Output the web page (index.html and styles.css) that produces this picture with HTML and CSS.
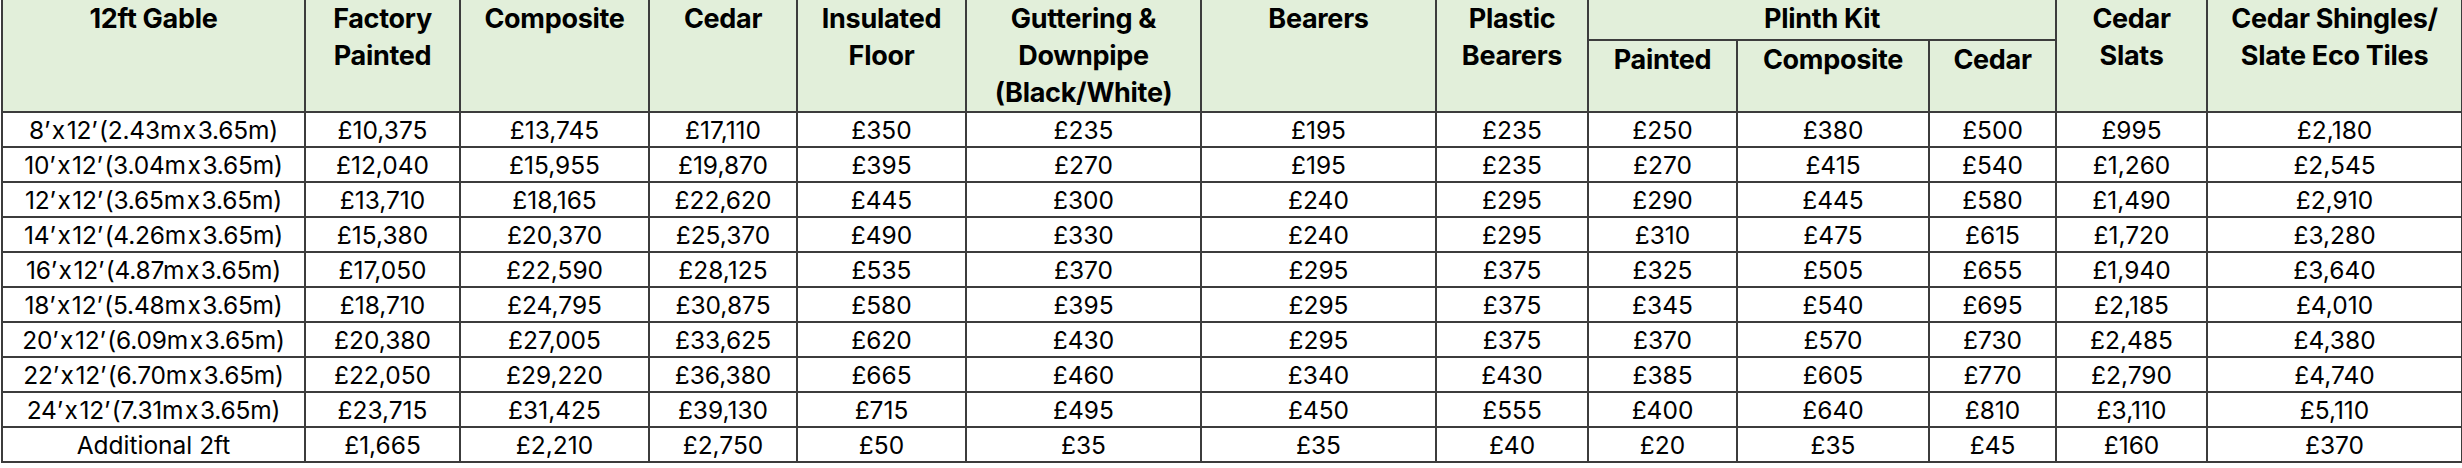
FILE: index.html
```html
<!DOCTYPE html>
<html>
<head>
<meta charset="utf-8">
<link rel="stylesheet" href="styles.css">
</head>
<body>
<table class="price">
<colgroup>
<col style="width:303px"><col style="width:155px"><col style="width:189px"><col style="width:148px"><col style="width:169px"><col style="width:235px"><col style="width:235px"><col style="width:152px"><col style="width:149px"><col style="width:192px"><col style="width:127px"><col style="width:151px"><col style="width:255px">
</colgroup>
<thead>
<tr class="h1">
<th rowspan="2">12ft Gable</th>
<th rowspan="2">Factory<br>Painted</th>
<th rowspan="2">Composite</th>
<th rowspan="2">Cedar</th>
<th rowspan="2">Insulated<br>Floor</th>
<th rowspan="2">Guttering &amp;<br>Downpipe<br>(Black/White)</th>
<th rowspan="2">Bearers</th>
<th rowspan="2">Plastic<br>Bearers</th>
<th colspan="3">Plinth Kit</th>
<th rowspan="2">Cedar<br>Slats</th>
<th rowspan="2">Cedar Shingles/<br>Slate Eco Tiles</th>
</tr>
<tr class="h2">
<th>Painted</th>
<th>Composite</th>
<th>Cedar</th>
</tr>
</thead>
<tbody>
<tr><td class="size">8’ x 12’ (2.43m x 3.65m)</td><td>£10,375</td><td>£13,745</td><td>£17,110</td><td>£350</td><td>£235</td><td>£195</td><td>£235</td><td>£250</td><td>£380</td><td>£500</td><td>£995</td><td>£2,180</td></tr>
<tr><td class="size">10’ x 12’ (3.04m x 3.65m)</td><td>£12,040</td><td>£15,955</td><td>£19,870</td><td>£395</td><td>£270</td><td>£195</td><td>£235</td><td>£270</td><td>£415</td><td>£540</td><td>£1,260</td><td>£2,545</td></tr>
<tr><td class="size">12’ x 12’ (3.65m x 3.65m)</td><td>£13,710</td><td>£18,165</td><td>£22,620</td><td>£445</td><td>£300</td><td>£240</td><td>£295</td><td>£290</td><td>£445</td><td>£580</td><td>£1,490</td><td>£2,910</td></tr>
<tr><td class="size">14’ x 12’ (4.26m x 3.65m)</td><td>£15,380</td><td>£20,370</td><td>£25,370</td><td>£490</td><td>£330</td><td>£240</td><td>£295</td><td>£310</td><td>£475</td><td>£615</td><td>£1,720</td><td>£3,280</td></tr>
<tr><td class="size">16’ x 12’ (4.87m x 3.65m)</td><td>£17,050</td><td>£22,590</td><td>£28,125</td><td>£535</td><td>£370</td><td>£295</td><td>£375</td><td>£325</td><td>£505</td><td>£655</td><td>£1,940</td><td>£3,640</td></tr>
<tr><td class="size">18’ x 12’ (5.48m x 3.65m)</td><td>£18,710</td><td>£24,795</td><td>£30,875</td><td>£580</td><td>£395</td><td>£295</td><td>£375</td><td>£345</td><td>£540</td><td>£695</td><td>£2,185</td><td>£4,010</td></tr>
<tr><td class="size">20’ x 12’ (6.09m x 3.65m)</td><td>£20,380</td><td>£27,005</td><td>£33,625</td><td>£620</td><td>£430</td><td>£295</td><td>£375</td><td>£370</td><td>£570</td><td>£730</td><td>£2,485</td><td>£4,380</td></tr>
<tr><td class="size">22’ x 12’ (6.70m x 3.65m)</td><td>£22,050</td><td>£29,220</td><td>£36,380</td><td>£665</td><td>£460</td><td>£340</td><td>£430</td><td>£385</td><td>£605</td><td>£770</td><td>£2,790</td><td>£4,740</td></tr>
<tr><td class="size">24’ x 12’ (7.31m x 3.65m)</td><td>£23,715</td><td>£31,425</td><td>£39,130</td><td>£715</td><td>£495</td><td>£450</td><td>£555</td><td>£400</td><td>£640</td><td>£810</td><td>£3,110</td><td>£5,110</td></tr>
<tr><td>Additional 2ft</td><td>£1,665</td><td>£2,210</td><td>£2,750</td><td>£50</td><td>£35</td><td>£35</td><td>£40</td><td>£20</td><td>£35</td><td>£45</td><td>£160</td><td>£370</td></tr>
</tbody>
</table>
</body>
</html>
```
FILE: styles.css
```css
html, body {
  margin: 0;
  padding: 0;
  background: #ffffff;
}
.price {
  border-collapse: collapse;
  table-layout: fixed;
  width: 2461px;
  margin: 0 0 0 1px;
  font-family: Inter, Roboto, "Liberation Sans", sans-serif;
  color: #000;
}
.price th, .price td {
  border: 2px solid #3c3c3c;
  padding: 0;
  text-align: center;
  overflow: hidden;
  white-space: nowrap;
}
.price th {
  background: #e2efda;
  font-weight: 700;
  font-size: 27px;
  line-height: 37px;
  vertical-align: top;
  letter-spacing: -0.3px;
}
.price thead tr.h1 {
  height: 39px;
}
.price thead tr.h2 {
  height: 71px;
}
.price thead tr:first-child th {
  border-top: none;
}
.price td {
  font-size: 24.5px;
  line-height: 30px;
  height: 33px;
  vertical-align: middle;
}
.price td.size {
  word-spacing: -5px;
  letter-spacing: -0.2px;
}
```
